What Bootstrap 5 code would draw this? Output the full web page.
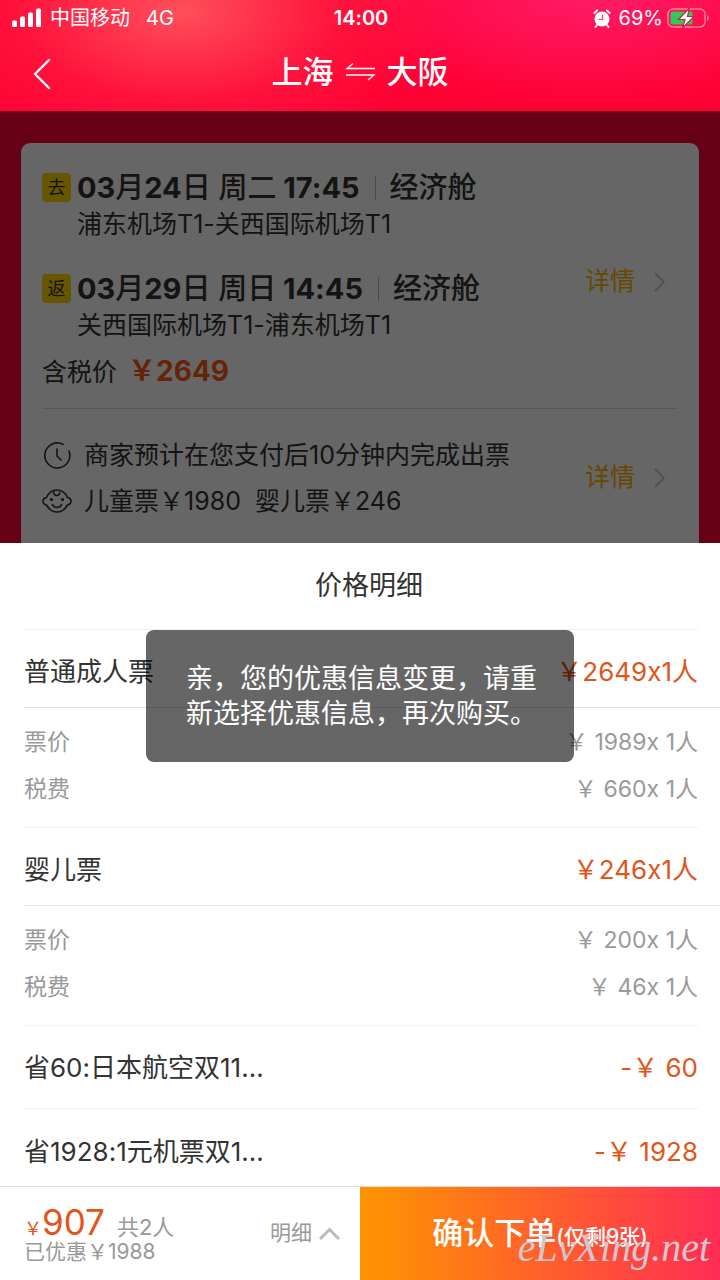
<!DOCTYPE html>
<html lang="zh-CN">
<head>
<meta charset="utf-8">
<meta name="viewport" content="width=device-width, initial-scale=1">
<title>上海 ⇌ 大阪</title>
<link href="https://cdn.jsdelivr.net/npm/bootstrap@5.3.0/dist/css/bootstrap.min.css" rel="stylesheet">
<style>
  :root { --ink: #333; --muted: #999; --price: #e0561a; --gutter: 24px; }
  body { font-family: Inter, "Noto Sans CJK SC", sans-serif; font-variant-ligatures: no-contextual; color: var(--ink); background: #fff; }
  svg { display: block; flex: none; }

  .top-area {
    color: #fff;
    background:
      radial-gradient(ellipse 270px 150px at 180px 10px, rgba(255,84,92,.95), rgba(255,40,72,.45) 60%, rgba(255,0,51,0)),
      radial-gradient(ellipse 260px 120px at 590px -10px, rgba(255,32,112,.9), rgba(255,0,51,0)),
      #ff0033;
  }
  .status-line { height: 36px; padding: 0 10px 0 12px; font-size: 20px; line-height: 36px; }
  .status-line > div { flex: 1 1 0; }
  .title-line { height: 75px; padding: 0 30px; }
  .title-line .side { flex: 1 1 0; }
  .city-pair { font-size: 31px; font-weight: 500; line-height: 46px; gap: 11px; padding-bottom: 4px; }

  .trip-area { background: #ff0033; padding: 32px 21px 0; }
  .mask { background: rgba(0,0,0,.6); }
  .trip-card { background: #fff; border-radius: 9px 9px 0 0; padding: 27px 21px 19px; font-size: 25px; }
  .leg { column-gap: 6px; margin-bottom: 28px; }
  .leg-tag { width: 29px; height: 29px; border-radius: 4px; background: #ffd800; font-size: 18px; line-height: 29px; margin-top: 3px; }
  .leg-time { font-size: 29px; font-weight: 700; line-height: 36px; }
  .leg-time .cabin { font-weight: 500; border-left: 1px solid #bbb; padding-left: 14px; margin-left: 15px; line-height: 24px; }
  .leg-time .zh { font-weight: 500; }
  .leg-place { line-height: 37px; }
  .tax-price { line-height: 36px; margin-top: -19px; padding-bottom: 4px; }
  .tax-price b { font-size: 28px; color: #ff5a10; }
  .trip-rule { height: 1px; background: #ddd; margin: 14px 0 23px; }
  .note-line { line-height: 46px; gap: 12px; }
  .more-link { color: #ffb400; gap: 19px; padding-right: 13px; }

  .sheet { background: #fff; font-size: 26px; }
  .sheet-title { font-size: 27px; line-height: 86px; font-weight: 400; padding-left: 18px; }
  .price-list { margin-left: var(--gutter); }
  .thin-line { border-top: 1px solid #f1f1f1; margin-right: 22px; }
  .item-head { line-height: 71px; padding: 6px 22px 0 0; }
  .item-head dt, .item-sub dt { font-weight: 400; }
  .item-head dd { color: var(--price); }
  .item-body { border-top: 1px solid #e2e2e2; padding: 11px 22px 14px 0; font-size: 23px; color: var(--muted); }
  .item-sub { line-height: 47px; }
  .saving { line-height: 80px; padding-top: 2px; }
  .saving.last { line-height: 69px; padding-top: 8px; }
  .saving dt { width: 244px; }
  .notice { top: 87px; left: 50%; transform: translateX(-50%); width: 428px; padding: 31px 36px 31px 40px; border-radius: 8px;
    background: rgba(0,0,0,.6); color: #fff; font-size: 27px; line-height: 35px; }

  .pay-bar { background: #fff; height: 94px; flex: none; border-top: 1px solid #ddd; }
  .pay-sum { padding: 14px 20px 15px var(--gutter); color: var(--muted); }
  .total-line { height: 38px; }
  .total { color: var(--price); font-size: 35px; line-height: 40px; }
  .total small { font-size: 18px; line-height: 18px; }
  .people { font-size: 22px; line-height: 24px; }
  .saved { font-size: 21px; line-height: 24px; }
  .fold-btn { color: var(--muted); font-size: 21px; gap: 7px; }
  .order-btn { color: #fff; border-radius: 0; background: linear-gradient(90deg, #ff9500, #ff2d55); font-size: 31px; font-weight: 500; padding: 0; }
  .order-btn span { font-size: 21px; }
  .site-mark { right: 10px; bottom: 8px; font: italic 40px/48px "Liberation Serif", serif; color: #d2c6cc; }
</style>
</head>
<body>
<div class="min-vh-100 d-flex flex-column">

  <header class="top-area">
    <div class="status-line d-flex">
      <div class="d-flex align-items-center gap-2">
        <svg width="30" height="20" viewBox="0 0 30 20" fill="#fff"><rect x="0" y="12.500" width="5" height="6.500" rx="1.500"/><rect x="8" y="8.500" width="5" height="10.500" rx="1.500"/><rect x="16" y="4.500" width="5" height="14.500" rx="1.500"/><rect x="24" y="0.500" width="5" height="18.500" rx="1.500"/></svg>
        <span>中国移动</span><span class="ps-2">4G</span>
      </div>
      <span class="fw-semibold">14:00</span>
      <div class="d-flex align-items-center justify-content-end">
        <svg class="me-2" width="18" height="19" viewBox="0 0 18 19"><circle cx="9" cy="10" r="7.500" fill="#fff"/><path d="M1.500 4 4 1.500M16.500 4 14 1.500M4 16 2.500 18M14 16 15.500 18" stroke="#fff" stroke-width="2" stroke-linecap="round"/><path d="M9.500 5.500v5H5.500" fill="none" stroke="#ff3a66" stroke-width="1.200"/></svg>
        <span>69%</span>
        <svg class="ms-1" width="43" height="22" viewBox="0 0 43 22"><rect x="1" y="2" width="37" height="18" rx="5" fill="none" stroke="#ff7f9a" stroke-width="1.400"/><path d="M40 8q4 3 0 6z" fill="#ff7f9a"/><rect x="3.500" y="4.500" width="22" height="13" rx="2.500" fill="#34c759"/><path d="M22.500 1 11.500 12.500H18L15.500 21 27 9.500h-6.500z" fill="#fff" stroke="#c02848" stroke-width="1.200"/></svg>
      </div>
    </div>
    <div class="title-line d-flex align-items-center">
      <div class="side"><button type="button" class="btn p-0 border-0" aria-label="返回"><svg width="24" height="34" viewBox="0 0 24 34"><path d="M19 3 5 17l14 14" fill="none" stroke="#fff" stroke-width="2.400" stroke-linecap="round" stroke-linejoin="round"/></svg></button></div>
      <h1 class="city-pair d-flex align-items-center m-0">
        <span>上海</span>
        <svg width="31" height="20" viewBox="0 0 31 20"><path d="M8 1.500 2 6.500h28M1 13h28l-6 5" fill="none" stroke="#fff" stroke-width="1.300"/></svg>
        <span>大阪</span>
      </h1>
      <div class="side"></div>
    </div>
  </header>

  <main class="trip-area position-relative">
    <section class="trip-card">
      <div class="d-flex justify-content-between align-items-center">
        <div>
          <div class="leg d-flex">
            <span class="leg-tag text-center">去</span>
            <div>
              <div class="leg-time d-flex align-items-center"><span>03<span class="zh">月</span>24<span class="zh">日 周二</span> 17:45</span><span class="cabin">经济舱</span></div>
              <div class="leg-place">浦东机场T1-关西国际机场T1</div>
            </div>
          </div>
          <div class="leg d-flex">
            <span class="leg-tag text-center">返</span>
            <div>
              <div class="leg-time d-flex align-items-center"><span>03<span class="zh">月</span>29<span class="zh">日 周日</span> 14:45</span><span class="cabin">经济舱</span></div>
              <div class="leg-place">关西国际机场T1-浦东机场T1</div>
            </div>
          </div>
          <div class="tax-price">含税价 <b class="ms-1"><span class="fw-semibold">￥</span>2649</b></div>
        </div>
        <a href="#" class="more-link d-flex align-items-center text-decoration-none">详情 <svg width="11" height="20" viewBox="0 0 11 20"><path d="m1 1 9 9-9 9" fill="none" stroke="#bbb" stroke-width="1.500"/></svg></a>
      </div>
      <div class="trip-rule"></div>
      <div class="d-flex justify-content-between align-items-center">
        <div>
          <div class="note-line d-flex align-items-center">
            <svg width="30" height="28" viewBox="0 0 30 28" fill="none" stroke="#333" stroke-width="1.600" stroke-linecap="round"><path d="M21 3.300A12.500 12.500 0 1 0 27 10"/><path d="M15 8v7l4 4"/></svg>
            <span>商家预计在您支付后10分钟内完成出票</span>
          </div>
          <div class="note-line d-flex align-items-center">
            <svg width="30" height="26" viewBox="0 0 30 26" fill="none" stroke="#333" stroke-width="1.600" stroke-linecap="round" stroke-linejoin="round"><path d="M4.500 9.500C7 4 10.500 2 15 2s8 2 10.500 7.500c2.500.5 3.500 2 3.500 3.500s-1 3.500-3.500 4C23 21.500 19.500 24 15 24S7 21.500 4.500 17C2 16.500 1 14.500 1 13s1-3 3.500-3.500z"/><path d="M11.500 3c0 3 1.500 4.500 3.500 4.500s3-1.500 2.500-3M10.500 16.500c1.500 4 7.500 4 9 0"/><circle cx="9.500" cy="11.500" r=".8"/><circle cx="20.500" cy="11.500" r=".8"/></svg>
            <span>儿童票￥1980&nbsp; 婴儿票￥246</span>
          </div>
        </div>
        <a href="#" class="more-link d-flex align-items-center text-decoration-none">详情 <svg width="11" height="20" viewBox="0 0 11 20"><path d="m1 1 9 9-9 9" fill="none" stroke="#bbb" stroke-width="1.500"/></svg></a>
      </div>
    </section>
    <div class="mask position-absolute top-0 start-0 w-100 h-100"></div>
  </main>

  <section class="sheet position-relative flex-grow-1">
    <h2 class="sheet-title text-center m-0">价格明细</h2>
    <div class="price-list">
      <div class="thin-line"></div>
      <dl class="item-head d-flex justify-content-between m-0"><dt>普通成人票</dt><dd class="m-0">￥2649x1人</dd></dl>
      <div class="item-body">
        <dl class="item-sub d-flex justify-content-between m-0"><dt>票价</dt><dd class="m-0">￥ 1989x 1人</dd></dl>
        <dl class="item-sub d-flex justify-content-between m-0"><dt>税费</dt><dd class="m-0">￥ 660x 1人</dd></dl>
      </div>
      <div class="thin-line"></div>
      <dl class="item-head d-flex justify-content-between m-0"><dt>婴儿票</dt><dd class="m-0">￥246x1人</dd></dl>
      <div class="item-body">
        <dl class="item-sub d-flex justify-content-between m-0"><dt>票价</dt><dd class="m-0">￥ 200x 1人</dd></dl>
        <dl class="item-sub d-flex justify-content-between m-0"><dt>税费</dt><dd class="m-0">￥ 46x 1人</dd></dl>
      </div>
      <div class="thin-line"></div>
      <dl class="item-head saving d-flex justify-content-between m-0"><dt class="text-nowrap">省60:日本航空双11...</dt><dd class="m-0">-￥ 60</dd></dl>
      <div class="thin-line"></div>
      <dl class="item-head saving last d-flex justify-content-between m-0"><dt class="text-nowrap">省1928:1元机票双1...</dt><dd class="m-0">-￥ 1928</dd></dl>
    </div>
    <div class="notice position-absolute" role="alert">亲，您的优惠信息变更，请重新选择优惠信息，再次购买。</div>
  </section>

  <footer class="pay-bar d-flex position-relative">
    <div class="pay-sum w-50 d-flex justify-content-between align-items-center">
      <div>
        <div class="total-line d-flex align-items-baseline"><span class="total"><small>￥</small>907</span><span class="people ms-2 ps-1">共2人</span></div>
        <div class="saved">已优惠￥1988</div>
      </div>
      <button type="button" class="fold-btn btn p-0 border-0 d-flex align-items-center">明细 <svg width="21" height="13" viewBox="0 0 21 13"><path d="m1 12 9.500-9.500L20 12" fill="none" stroke="#bbb" stroke-width="3"/></svg></button>
    </div>
    <button type="button" class="order-btn btn w-50 border-0">确认下单<span>(仅剩9张)</span></button>
    <span class="site-mark position-absolute pe-none">eLvXing.net</span>
  </footer>
</div>
<script src="https://cdn.jsdelivr.net/npm/bootstrap@5.3.0/dist/js/bootstrap.bundle.min.js"></script>
</body>
</html>
